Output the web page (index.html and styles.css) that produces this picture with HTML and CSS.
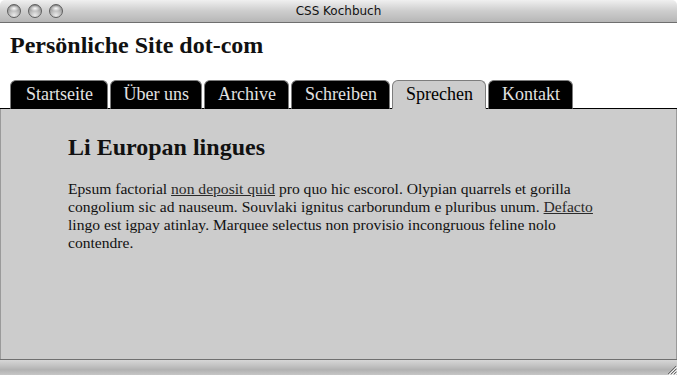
FILE: index.html
```html
<!DOCTYPE html>
<html lang="de">
<head>
    <meta charset="UTF-8">
    <title>CSS Kochbuch</title>
    <link rel="stylesheet" href="styles.css">
</head>
<body>
    <div class="window">
        <div class="titlebar">
            <div class="lights">
                <span class="light"></span>
                <span class="light"></span>
                <span class="light"></span>
            </div>
            <div class="title">CSS Kochbuch</div>
            <div></div>
        </div>

        <div class="page">
            <header class="site-header">
                <h1>Persönliche Site dot-com</h1>
                <ul class="tabs">
                    <li><a href="#">Startseite</a></li>
                    <li><a href="#">Über uns</a></li>
                    <li><a href="#">Archive</a></li>
                    <li><a href="#">Schreiben</a></li>
                    <li class="current"><a href="#">Sprechen</a></li>
                    <li><a href="#">Kontakt</a></li>
                </ul>
            </header>

            <main class="content">
                <h2>Li Europan lingues</h2>
                <p>Epsum factorial <a href="#">non deposit quid</a> pro quo hic escorol. Olypian quarrels et gorilla congolium sic ad nauseum. Souvlaki ignitus carborundum e pluribus unum. <a href="#">Defacto</a> lingo est igpay atinlay. Marquee selectus non provisio incongruous feline nolo contendre.</p>
            </main>
        </div>

        <div class="statusbar">
            <svg class="grip" width="12" height="12" viewBox="0 0 12 12">
                <path d="M11 3 L3 11 M11 6 L6 11 M11 9 L9 11" stroke="#6a6a6a" stroke-width="1"/>
                <path d="M12 4 L4 12 M12 7 L7 12 M12 10 L10 12" stroke="#f4f4f4" stroke-width="1"/>
            </svg>
        </div>
    </div>
</body>
</html>
```

FILE: styles.css
```css
:root {
    --tab-border: #7d7d7d;
    --content-bg: #cccccc;
    --text-color: #111111;
}

* {
    margin: 0;
    padding: 0;
    box-sizing: border-box;
}

body {
    width: 677px;
    height: 375px;
    overflow: hidden;
    background: #ffffff;
}

.window {
    display: flex;
    flex-direction: column;
    height: 375px;
}

/* Barre de titre */
.titlebar {
    display: grid;
    grid-template-columns: 1fr auto 1fr;
    align-items: center;
    height: 23px;
    border-bottom: 1px solid #6f6f6f;
    border-radius: 5px 5px 0 0;
    background: linear-gradient(#f0f0f0, #e2e2e2 20%, #cdcdcd 50%, #c2c2c2 75%, #b6b6b6);
}

.lights {
    display: flex;
    gap: 7px;
    padding-left: 7px;
    padding-bottom: 1px;
}

.light {
    width: 14px;
    height: 14px;
    border-radius: 50%;
    border: 1px solid #5e5e5e;
    background:
        radial-gradient(ellipse 5px 3px at 50% 28%, rgba(255, 255, 255, 0.95), rgba(255, 255, 255, 0) 100%),
        radial-gradient(circle at 50% 85%, #eaeaea 0, #adadad 55%, #7d7d7d 100%);
}

.title {
    font-family: "DejaVu Sans", sans-serif;
    font-size: 12px;
    color: #111;
    padding-bottom: 1px;
}

/* Page */
.page {
    flex: 1;
    display: flex;
    flex-direction: column;
    border-left: 1px solid #9a9a9a;
    border-right: 1px solid #9a9a9a;
    font-family: "Liberation Serif", "Times New Roman", serif;
    color: var(--text-color);
}

.site-header {
    background: #ffffff;
    padding-top: 8px;
    margin-left: -1px;
    margin-right: -1px;
}

h1 {
    font-size: 24px;
    line-height: 28px;
    padding-left: 10px;
    margin-bottom: 21px;
}

.tabs {
    display: flex;
    list-style: none;
    padding-left: 10px;
    border-bottom: 1px solid #000;
}

.tabs li {
    margin-right: 2px;
    margin-bottom: -1px;
}

.tabs a {
    display: block;
    padding: 0 12.5px;
    height: 29px;
    font-size: 18px;
    line-height: 27px;
    color: #e2e2e2;
    text-decoration: none;
    background: #000;
    border: 1px solid var(--tab-border);
    border-bottom: 1px solid #000;
    border-radius: 6px 6px 0 0;
}

.tabs li:first-child a {
    padding: 0 14px 0 15px;
}

.tabs .current a {
    color: #000;
    background: var(--content-bg);
    border-bottom-color: var(--content-bg);
}

.content {
    flex: 1;
    background: var(--content-bg);
    padding: 25px 68px 0 67px;
}

h2 {
    font-size: 24px;
    line-height: 27px;
    margin-bottom: 19px;
}

p {
    font-size: 15.6px;
    line-height: 18px;
    max-width: 545px;
}

p a {
    color: #2a2a2a;
}

/* Barre du bas */
.statusbar {
    display: flex;
    justify-content: flex-end;
    align-items: flex-end;
    height: 16px;
    border-top: 1px solid #6f6f6f;
    background: linear-gradient(#d6d6d6, #c4c4c4 35%, #b2b2b2 65%, #c6c6c6);
}

.grip {
    display: block;
}
```
